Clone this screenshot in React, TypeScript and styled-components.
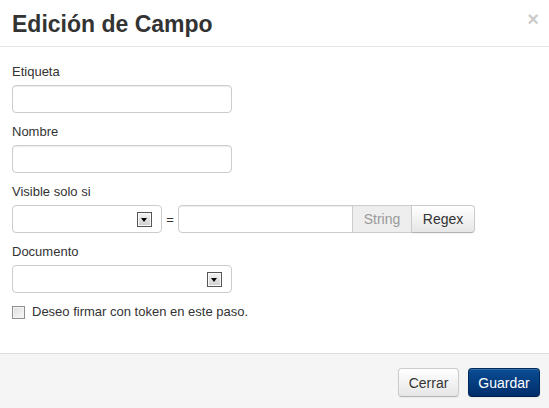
import React from 'react'
import styled, { createGlobalStyle } from 'styled-components'

const GlobalStyle = createGlobalStyle`
	html, body {
		margin: 0;
		padding: 0;
		background: #fff;
	}
	body {
		font-family: 'Liberation Sans', Arial, sans-serif;
		font-size: 13px;
		color: #333;
	}
`

const App: React.FC = () => {
	return (
		<Modal>
			<GlobalStyle />
			<Header>
				<Title>Edición de Campo</Title>
				<Close type="button">×</Close>
			</Header>
			<Body>
				<Field>
					<Label>Etiqueta</Label>
					<TextInput width={220} />
				</Field>
				<Field>
					<Label>Nombre</Label>
					<TextInput width={220} />
				</Field>
				<Field>
					<Label>Visible solo si</Label>
					<Row>
						<FakeSelect width={150}>
							<ArrowBox />
						</FakeSelect>
						<Equals>=</Equals>
						<InputGroup>
							<GroupInput />
							<Addon>String</Addon>
							<GroupButton type="button">Regex</GroupButton>
						</InputGroup>
					</Row>
				</Field>
				<Field>
					<Label>Documento</Label>
					<FakeSelect width={220}>
						<ArrowBox />
					</FakeSelect>
				</Field>
				<CheckRow>
					<Check type="checkbox" />
					<span>Deseo firmar con token en este paso.</span>
				</CheckRow>
			</Body>
			<Footer>
				<Button type="button">Cerrar</Button>
				<Button type="button" primary>
					Guardar
				</Button>
			</Footer>
		</Modal>
	)
}

export default App

const Modal = styled.div`
	width: 549px;
	height: 408px;
	display: flex;
	flex-direction: column;
	background: #fff;
`

const Header = styled.div`
	display: flex;
	align-items: center;
	justify-content: space-between;
	height: 46px;
	padding: 0 10px 0 12px;
	border-bottom: 1px solid #e5e5e5;
`

const Title = styled.h3`
	margin: 0;
	font-size: 23px;
	font-weight: bold;
	color: #333;
	line-height: 30px;
	padding-top: 2px;
`

const Close = styled.button`
	background: none;
	border: 0;
	padding: 0;
	margin-top: -8px;
	font-family: 'Liberation Sans', Arial, sans-serif;
	font-size: 20px;
	font-weight: bold;
	line-height: 20px;
	color: #000;
	opacity: 0.2;
	cursor: pointer;
`

const Body = styled.div`
	flex: 1;
	padding: 16px 12px 0;
`

const Field = styled.div`
	margin-bottom: 10px;
`

const Label = styled.label`
	display: block;
	line-height: 18px;
	margin-bottom: 4px;
`

const TextInput = styled.input<{ width: number }>`
	display: block;
	box-sizing: border-box;
	width: ${p => p.width}px;
	height: 28px;
	margin: 0;
	padding: 4px 6px;
	border: 1px solid #ccc;
	border-radius: 4px;
	box-shadow: inset 0 1px 1px rgba(0, 0, 0, 0.075);
	background: #fff;
	font: inherit;
`

const Row = styled.div`
	display: flex;
	align-items: center;
`

const FakeSelect = styled.div<{ width: number }>`
	box-sizing: border-box;
	width: ${p => p.width}px;
	height: 28px;
	display: flex;
	align-items: center;
	justify-content: flex-end;
	padding-right: 9px;
	border: 1px solid #ccc;
	border-radius: 4px;
	background: #fff;
`

const ArrowBox = styled.span`
	position: relative;
	box-sizing: border-box;
	width: 15px;
	height: 15px;
	border: 1px solid #555;
	background: linear-gradient(#f4f4f4, #cfcfcf);
	box-shadow: inset 0 0 0 1px #fafafa;

	&::after {
		content: '';
		position: absolute;
		left: 3px;
		top: 5px;
		border-left: 3.5px solid transparent;
		border-right: 3.5px solid transparent;
		border-top: 4px solid #000;
	}
`

const Equals = styled.span`
	width: 16px;
	text-align: center;
`

const InputGroup = styled.div`
	display: flex;
	height: 28px;
`

const GroupInput = styled.input`
	box-sizing: border-box;
	width: 175px;
	height: 28px;
	margin: 0;
	padding: 4px 6px;
	border: 1px solid #ccc;
	border-radius: 4px 0 0 4px;
	box-shadow: inset 0 1px 1px rgba(0, 0, 0, 0.075);
	font: inherit;
`

const Addon = styled.span`
	box-sizing: border-box;
	width: 60px;
	display: flex;
	align-items: center;
	justify-content: center;
	margin-left: -1px;
	border: 1px solid #ccc;
	background: #eee;
	color: #999;
	font-size: 14px;
`

const GroupButton = styled.button`
	box-sizing: border-box;
	width: 64px;
	margin-left: -1px;
	padding: 0;
	border: 1px solid #ccc;
	border-bottom-color: #b3b3b3;
	border-radius: 0 4px 4px 0;
	background: linear-gradient(#fff, #e6e6e6);
	box-shadow: inset 0 1px 0 rgba(255, 255, 255, 0.2), 0 1px 2px rgba(0, 0, 0, 0.05);
	color: #333;
	font-family: 'Liberation Sans', Arial, sans-serif;
	font-size: 14px;
`

const CheckRow = styled.label`
	display: flex;
	align-items: center;
	gap: 7px;
	line-height: 18px;
`

const Check = styled.input`
	appearance: none;
	box-sizing: border-box;
	width: 13px;
	height: 13px;
	margin: 0;
	border: 1px solid #8f8f8f;
	background: linear-gradient(135deg, #dcdcdc, #fafafa);
	box-shadow: inset 0 0 0 1px #f4f4f4;
`

const Footer = styled.div`
	display: flex;
	justify-content: flex-end;
	gap: 9px;
	height: 55px;
	box-sizing: border-box;
	padding: 14px 9px 0;
	border-top: 1px solid #ddd;
	background: #f5f5f5;
`

const Button = styled.button<{ primary?: boolean }>`
	box-sizing: border-box;
	height: 29px;
	min-width: ${p => (p.primary ? '72px' : '61px')};
	padding: 0 9px;
	border: 1px solid ${p => (p.primary ? '#002a5e' : '#ccc')};
	border-bottom-color: ${p => (p.primary ? '#001f47' : '#b3b3b3')};
	border-radius: 4px;
	background: ${p => (p.primary ? 'linear-gradient(#0a4c94, #002e6b)' : 'linear-gradient(#fff, #e6e6e6)')};
	box-shadow: inset 0 1px 0 rgba(255, 255, 255, 0.2), 0 1px 2px rgba(0, 0, 0, 0.05);
	color: ${p => (p.primary ? '#fff' : '#333')};
	font-family: 'Liberation Sans', Arial, sans-serif;
	font-size: 14px;
	cursor: pointer;
`
